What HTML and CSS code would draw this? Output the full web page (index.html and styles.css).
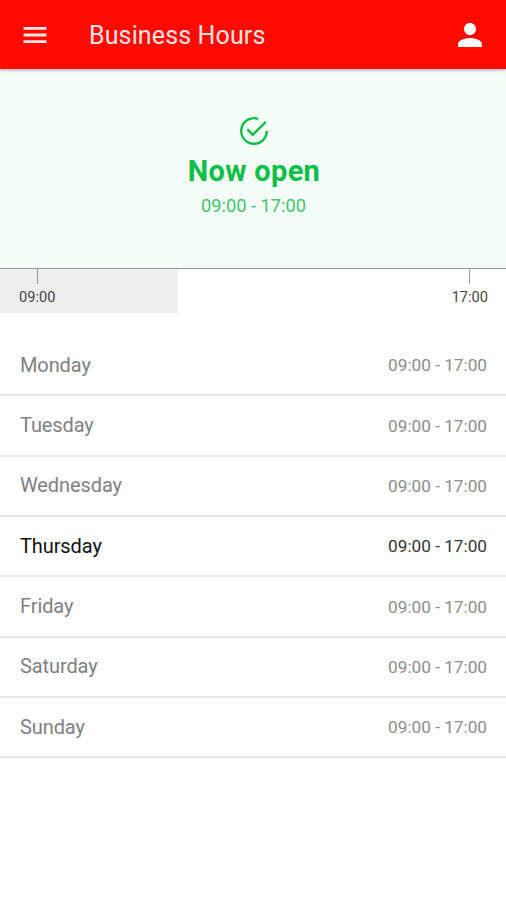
FILE: index.html
```html
<!DOCTYPE html>
<html lang="en">
<head>
<meta charset="utf-8">
<title>Business Hours</title>
<link rel="stylesheet" href="styles.css">
</head>
<body>
<header class="bar">
  <svg class="menu" viewBox="0 0 24 16"><path d="M0.5 0h23v2.8h-23zM0.5 6.6h23v2.8h-23zM0.5 13.2h23V16h-23z"/></svg>
  <h1 class="title">Business Hours</h1>
  <svg class="person" viewBox="4 4 16 16"><path d="M12 12c2.21 0 4-1.79 4-4s-1.79-4-4-4-4 1.79-4 4 1.79 4 4 4zm0 2c-2.67 0-8 1.34-8 4v2h16v-2c0-2.66-5.33-4-8-4z"/></svg>
</header>
<section class="status">
  <svg class="check" viewBox="0 0 30 30"><path d="M20.2 2.9A12.8 12.8 0 1 0 28.8 15M9.4 13.4l5.4 5.4L27.8 5.8"/></svg>
  <div class="state">Now open</div>
  <div class="range">09:00 - 17:00</div>
</section>
<section class="timeline">
  <div class="mark"><i class="tick"></i><span>09:00</span></div>
  <div class="mark"><i class="tick"></i><span>17:00</span></div>
</section>
<ul class="days">
  <li class="day"><span class="name">Monday</span><span class="hours">09:00 - 17:00</span></li>
  <li class="day"><span class="name">Tuesday</span><span class="hours">09:00 - 17:00</span></li>
  <li class="day"><span class="name">Wednesday</span><span class="hours">09:00 - 17:00</span></li>
  <li class="day today"><span class="name">Thursday</span><span class="hours">09:00 - 17:00</span></li>
  <li class="day"><span class="name">Friday</span><span class="hours">09:00 - 17:00</span></li>
  <li class="day"><span class="name">Saturday</span><span class="hours">09:00 - 17:00</span></li>
  <li class="day"><span class="name">Sunday</span><span class="hours">09:00 - 17:00</span></li>
</ul>
</body>
</html>
```
FILE: styles.css
```css
* { box-sizing: border-box; }
body { margin: 0; height: 900px; overflow: hidden; background: #fff; font-family: Roboto, "Liberation Sans", sans-serif; color: #808080; }
.bar { position: relative; display: flex; align-items: center; height: 69px; padding: 0 24px 0 23px; background: #ff0a00; box-shadow: 0 1px 3px rgba(0,0,0,.35); color: #ffe4e2; }
.menu { width: 24px; height: 16px; fill: #ffe4e2; }
.title { flex: 1; margin: 1px 0 0 42px; font-size: 25px; font-weight: 400; letter-spacing: .13px; }
.person { width: 24px; height: 24px; fill: #fff; }
.status { display: flex; flex-direction: column; align-items: center; height: 199px; padding-top: 47px; background: #f5fdf8; color: #0dbf47; }
.check { width: 30px; height: 30px; fill: none; stroke: #0dbf47; stroke-width: 2.4; }
.state { margin: 7px 0 0 2px; font-size: 29px; line-height: 36px; font-weight: 700; letter-spacing: .3px; }
.range { margin: 6px 0 0 1px; font-size: 18.3px; line-height: 22px; color: #3fc56c; }
.timeline { display: flex; justify-content: space-between; height: 45px; padding: 0 18px 0 19px; border-top: 1px solid #999; background: linear-gradient(#eeeef0, #eeeef0) 0 0 / 178px 100% no-repeat; }
.mark { display: flex; flex-direction: column; align-items: center; font-size: 14.6px; line-height: 18px; color: #444; }
.tick { width: 1px; height: 15px; margin-bottom: 4px; background: #999; }
.days { margin: 23px 0 0; padding: 0; list-style: none; }
.day { display: flex; justify-content: space-between; align-items: center; height: 60.35px; padding: 0 19px 0 20px; border-bottom: 2px solid #e8e8e8; }
.name { margin-top: -1px; font-size: 20px; letter-spacing: -.1px; }
.hours { font-size: 17.2px; color: #8c8c8c; }
.today { color: #111; }
.today .hours { color: #333; }
```
